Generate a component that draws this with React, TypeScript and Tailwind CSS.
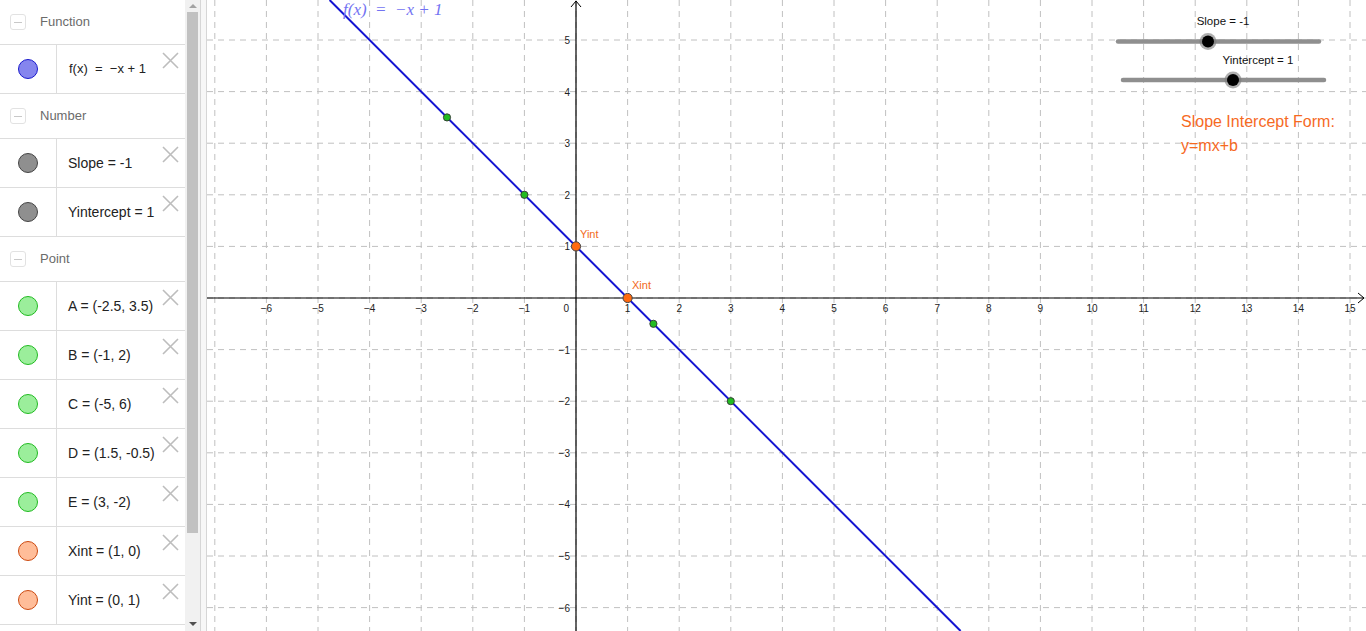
import React from 'react';

const U = 51.6;
const OX = 369;
const OY = 298;
const gx = (x: number) => OX + x * U;
const gy = (y: number) => OY - y * U;

type Item = { label: string; fill: string; stroke: string; math?: boolean };
type Section = { title: string; items: Item[] };

const sections: Section[] = [
  {
    title: 'Function',
    items: [{ label: 'f(x)  =  −x + 1', fill: '#8585ee', stroke: '#1a1acc', math: true }],
  },
  {
    title: 'Number',
    items: [
      { label: 'Slope = -1', fill: '#8f8f8f', stroke: '#444' },
      { label: 'Yintercept = 1', fill: '#8f8f8f', stroke: '#444' },
    ],
  },
  {
    title: 'Point',
    items: [
      { label: 'A = (-2.5, 3.5)', fill: '#9bee9b', stroke: '#22bb22' },
      { label: 'B = (-1, 2)', fill: '#9bee9b', stroke: '#22bb22' },
      { label: 'C = (-5, 6)', fill: '#9bee9b', stroke: '#22bb22' },
      { label: 'D = (1.5, -0.5)', fill: '#9bee9b', stroke: '#22bb22' },
      { label: 'E = (3, -2)', fill: '#9bee9b', stroke: '#22bb22' },
      { label: 'Xint = (1, 0)', fill: '#ffbd99', stroke: '#cc4a10' },
      { label: 'Yint = (0, 1)', fill: '#ffbd99', stroke: '#cc4a10' },
    ],
  },
];

function CloseIcon() {
  return (
    <svg width="17" height="17" viewBox="0 0 17 17" className="absolute right-[6px] top-[7px]">
      <path d="M1 1 L16 16 M16 1 L1 16" stroke="#bdbdbd" strokeWidth="1.6" />
    </svg>
  );
}

function AlgebraView() {
  return (
    <div className="flex h-full w-[200px] shrink-0 bg-white">
      <div className="w-[185px] shrink-0 overflow-hidden">
        {sections.map((s) => (
          <div key={s.title}>
            <div className="flex h-[45px] items-center border-b border-[#dddddd]">
              <div className="ml-[10px] flex h-[16px] w-[16px] items-center justify-center rounded-[3px] border border-[#e2e2e2]">
                <div className="h-[1px] w-[8px] bg-[#c8c8c8]" />
              </div>
              <span className="ml-[14px] text-[13px] text-[#6b6b6b]">{s.title}</span>
            </div>
            {s.items.map((it) => (
              <div key={it.label} className="relative flex h-[49px] border-b border-[#dddddd]">
                <div className="flex w-[57px] shrink-0 items-center justify-center border-r border-[#dddddd]">
                  <div
                    className="h-[20px] w-[20px] rounded-full border"
                    style={{ background: it.fill, borderColor: it.stroke }}
                  />
                </div>
                <div
                  className={
                    it.math
                      ? 'flex items-center whitespace-pre pl-[12px] text-[13px] text-[#222]'
                      : 'flex items-center whitespace-nowrap pl-[11px] text-[14px] text-[#222]'
                  }
                >
                  {it.label}
                </div>
                <CloseIcon />
              </div>
            ))}
          </div>
        ))}
      </div>
      <div className="relative w-[15px] shrink-0 bg-[#f1f1f1]">
        <div className="absolute left-[4px] top-[4px] h-0 w-0 border-x-[4px] border-b-[4px] border-x-transparent border-b-[#a3a3a3]" />
        <div className="absolute left-[2px] right-[2px] top-[12px] h-[521px] bg-[#c1c1c1]" />
        <div className="absolute bottom-[5px] left-[4px] h-0 w-0 border-x-[4px] border-t-[4px] border-x-transparent border-t-[#505050]" />
      </div>
    </div>
  );
}

function Graphics() {
  const xs: number[] = [];
  for (let i = -7; i <= 15; i++) xs.push(i);
  const ys: number[] = [];
  for (let j = -6; j <= 5; j++) ys.push(j);
  const greens = [
    [-2.5, 3.5],
    [-1, 2],
    [1.5, -0.5],
    [3, -2],
  ];
  const yTop = OY / U;
  const yBot = -(631 - OY) / U;

  return (
    <svg width="1159" height="631" className="block" style={{ fontFamily: '"Liberation Sans", Arial, sans-serif' }}>
      <rect width="1159" height="631" fill="#ffffff" />
      {xs.map((i) => (
        <line key={'gx' + i} x1={gx(i)} x2={gx(i)} y1={0} y2={631} stroke="#c0c0c0" strokeDasharray="6 5" />
      ))}
      {ys.map((j) => (
        <line key={'gy' + j} x1={0} x2={1159} y1={gy(j)} y2={gy(j)} stroke="#c0c0c0" strokeDasharray="6 5" />
      ))}
      {/* axes */}
      <line x1={0} x2={1157} y1={OY} y2={OY} stroke="#000" strokeWidth="1.2" />
      <path d={`M1151 ${OY - 5} L1157 ${OY} L1151 ${OY + 5}`} fill="none" stroke="#000" />
      <line x1={OX} x2={OX} y1={1} y2={631} stroke="#000" strokeWidth="1.2" />
      <path d={`M${OX - 5} 7 L${OX} 1 L${OX + 5} 7`} fill="none" stroke="#000" />
      {xs
        .filter((i) => i !== 0 && i !== -7)
        .map((i) => (
          <text key={'lx' + i} x={gx(i)} y={OY + 14} fontSize="10" textAnchor="middle" fill="#222">
            {i < 0 ? '−' + Math.abs(i) : i}
          </text>
        ))}
      {ys
        .filter((j) => j !== 0)
        .map((j) => (
          <text key={'ly' + j} x={OX - 6} y={gy(j) + 4} fontSize="10" textAnchor="end" fill="#222">
            {j < 0 ? '−' + Math.abs(j) : j}
          </text>
        ))}
      <text x={OX - 7} y={OY + 14} fontSize="10" textAnchor="end" fill="#222">
        0
      </text>

      {/* function */}
      <line x1={gx(1 - yTop)} y1={0} x2={gx(1 - yBot)} y2={631} stroke="#1414d2" strokeWidth="2" />
      <text
        x={136}
        y={15}
        fontSize="17"
        fill="#7373f2"
        fontStyle="italic"
        style={{ fontFamily: '"Liberation Serif", "DejaVu Serif", serif', whiteSpace: 'pre' }}
      >
        f(x)  =  −x + 1
      </text>

      {greens.map(([x, y]) => (
        <circle key={'p' + x} cx={gx(x)} cy={gy(y)} r="3.6" fill="#22bb22" stroke="#333" strokeWidth="0.9" />
      ))}
      <circle cx={gx(0)} cy={gy(1)} r="4.6" fill="#ff6a10" stroke="#444" strokeWidth="1" />
      <circle cx={gx(1)} cy={gy(0)} r="4.6" fill="#ff6a10" stroke="#444" strokeWidth="1" />
      <text x={373} y={238} fontSize="11" fill="#f26a22">
        Yint
      </text>
      <text x={425} y={289} fontSize="11" fill="#f26a22">
        Xint
      </text>

      {/* sliders */}
      <text x={1016} y={25} fontSize="11.5" textAnchor="middle" fill="#111">
        Slope = -1
      </text>
      <line x1={911} x2={1112} y1={41.5} y2={41.5} stroke="#8f8f8f" strokeWidth="4.5" strokeLinecap="round" />
      <circle cx={1001} cy={41.5} r="8.5" fill="#7a7a7a" fillOpacity="0.6" />
      <circle cx={1001} cy={41.5} r="6" fill="#000" />

      <text x={1051} y={64} fontSize="11.5" textAnchor="middle" fill="#111">
        Yintercept = 1
      </text>
      <line x1={916} x2={1117} y1={80} y2={80} stroke="#8f8f8f" strokeWidth="4.5" strokeLinecap="round" />
      <circle cx={1026} cy={80} r="8.5" fill="#7a7a7a" fillOpacity="0.6" />
      <circle cx={1026} cy={80} r="6" fill="#000" />

      <text x={974} y={127} fontSize="16" fill="#f66a1f">
        Slope Intercept Form:
      </text>
      <text x={974} y={151} fontSize="16" fill="#f66a1f">
        y=mx+b
      </text>
    </svg>
  );
}

export default function App() {
  return (
    <div
      className="flex h-[631px] w-[1366px] overflow-hidden bg-white"
      style={{ fontFamily: '"Liberation Sans", Arial, sans-serif' }}
    >
      <AlgebraView />
      <div className="h-full w-[7px] shrink-0 border-x border-[#d6d6d6] bg-[#f7f7f7]" />
      <Graphics />
    </div>
  );
}
